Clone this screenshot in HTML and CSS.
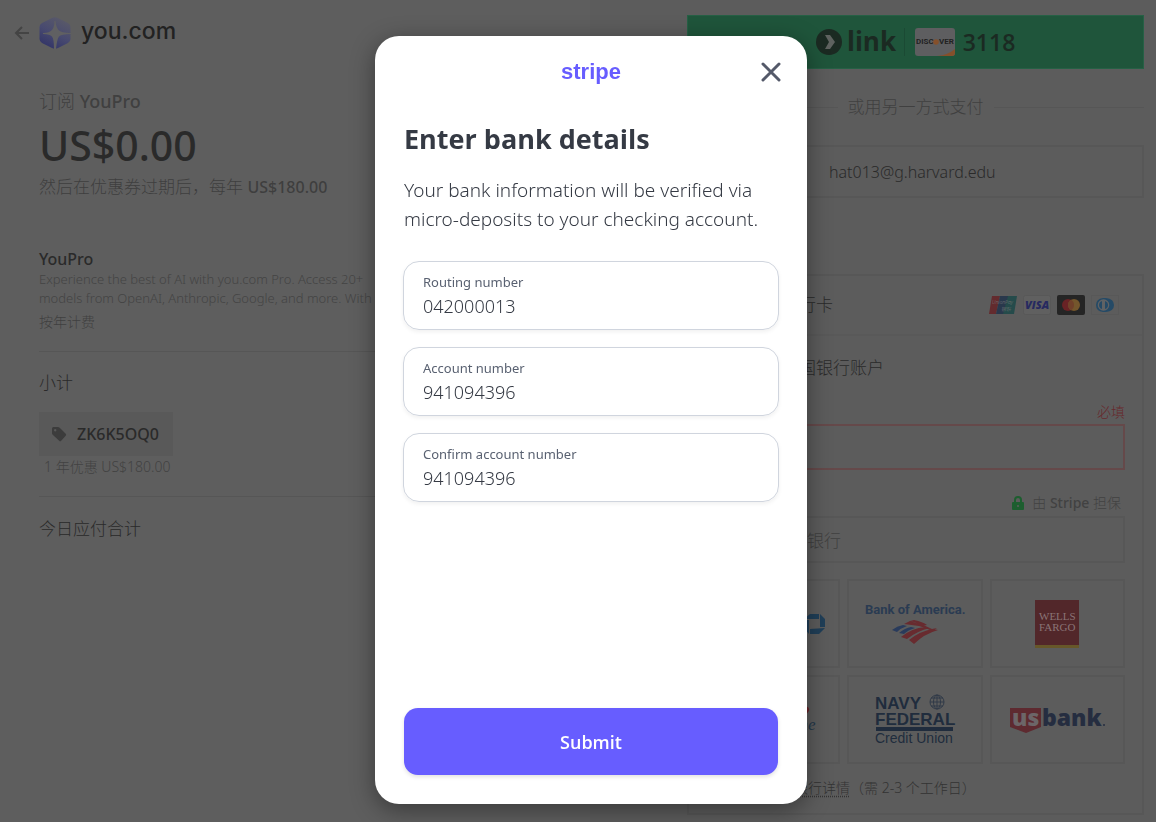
FILE: index.html
```html
<!DOCTYPE html>
<html lang="zh-CN">
<head>
    <meta charset="UTF-8">
    <meta name="viewport" content="width=device-width, initial-scale=1.0">
    <title>you.com - YouPro</title>
    <link rel="stylesheet" href="styles.css">
</head>
<body>
    <main class="checkout">
        <section class="summary">
            <a class="brand" href="#">
                <svg class="back-icon" width="16" height="14" viewBox="0 0 16 14" fill="none" stroke="#444" stroke-width="2">
                    <path d="M15 7H2M8 1L2 7l6 6"/>
                </svg>
                <svg class="logo" width="32" height="32" viewBox="0 0 32 32">
                    <defs>
                        <linearGradient id="hex" x1="0.2" y1="1" x2="0.7" y2="0">
                            <stop offset="0" stop-color="#303266"/>
                            <stop offset="0.5" stop-color="#484a70"/>
                            <stop offset="1" stop-color="#5a5a68"/>
                        </linearGradient>
                    </defs>
                    <path fill="url(#hex)" d="M13 1q3-1.600 6 0l10 5q2.500 1.500 2.500 4v12q0 2.500-2.500 4l-10 5q-3 1.600-6 0l-10-5q-2.500-1.500-2.500-4V10q0-2.500 2.500-4z"/>
                    <path fill="#606062" d="M15.500 4h1q.5 6 3 9t12.500 3v1q-10 0-12 2.500t-3 12.500h-2q0-10-2-12.500T4 17v-1q6.500 0 9-3t2.500-9z"/>
                </svg>
                <span class="brand-name">you.com</span>
            </a>

            <p class="plan">订阅 <b>YouPro</b></p>
            <h1 class="price">US$0.00</h1>
            <p class="after">然后在优惠券过期后，每年 <b>US$180.00</b></p>

            <div class="product">
                <h2>YouPro</h2>
                <p class="description">Experience the best of AI with you.com Pro. Access 20+ models from OpenAI, Anthropic, Google, and more. With</p>
                <p class="billing">按年计费</p>
            </div>
            <div class="subtotal">
                <p class="row-label">小计</p>
                <div class="coupon">
                    <svg width="16" height="16" viewBox="0 0 16 16">
                        <path fill="#3c3c3c" fill-rule="evenodd" d="M1 2.500Q1 1 2.500 1H7q1 0 1.700.7l6 6q1 1 0 2l-4.500 5q-1 1-2 0l-6.500-6Q1 8 1 7zM4.200 3a1.200 1.200 0 1 0 .01 0z"/>
                    </svg>
                    <span>ZK6K5OQ0</span>
                </div>
                <p class="discount">1 年优惠 US$180.00</p>
            </div>
            <p class="total">今日应付合计</p>
        </section>

        <section class="payment">
            <button class="link-button" type="button">
                <svg width="78" height="28" viewBox="0 0 78 28">
                    <circle cx="13" cy="14" r="13" fill="#1b2a22"/>
                    <path d="M9 7h5l5 7-5 7H9l4-7z" fill="#5e625f"/>
                    <text x="31" y="23" class="link-word">link</text>
                </svg>
                <span class="bar"></span>
                <svg width="40" height="28" viewBox="0 0 40 28">
                    <rect width="40" height="28" rx="3" fill="#5e5e60"/>
                    <path fill="#85502b" d="M22 28q11-1 18-7v4q0 3-3 3z"/>
                    <text x="1" y="16" class="discover">DISC</text>
                    <circle cx="21" cy="14" r="2.800" fill="#85502b"/>
                    <text x="24" y="16" class="discover">VER</text>
                </svg>
                <span class="last4">3118</span>
            </button>

            <div class="divider">或用另一方式支付</div>

            <div class="email">
                <span class="email-label">电子邮件</span>
                <span>hat013@g.harvard.edu</span>
            </div>

            <div class="methods">
                <div class="method card-method">
                    <span>银行卡</span>
                    <div class="cards">
                        <svg width="28" height="20" viewBox="0 0 28 20">
                            <path fill="#632b2e" d="M3 1h8L7 19H0z"/>
                            <path fill="#29384c" d="M11 1h9l-5 18H7z"/>
                            <path fill="#254b4b" d="M19 1h9l-3 18H14z"/>
                            <text x="3" y="9" class="union">UnionPay</text>
                            <text x="12" y="16" class="union">银联</text>
                        </svg>
                        <svg width="28" height="20" viewBox="0 0 28 20">
                            <rect x="0.500" y="0.500" width="27" height="19" rx="2" fill="#606060" stroke="#585858"/>
                            <text x="2" y="14" class="visa">VISA</text>
                        </svg>
                        <svg width="28" height="20" viewBox="0 0 28 20">
                            <rect width="28" height="20" rx="2" fill="#252525"/>
                            <circle cx="11" cy="10" r="6" fill="#692225"/>
                            <circle cx="17" cy="10" r="6" fill="#74562c"/>
                            <path fill="#70402a" d="M14 4.800a6 6 0 0 1 0 10.400 6 6 0 0 1 0-10.400z"/>
                        </svg>
                        <svg width="28" height="20" viewBox="0 0 28 20">
                            <rect x="0.500" y="0.500" width="27" height="19" fill="none" stroke="#585858"/>
                            <path fill="#254a66" d="M12 3h3q8 1 8 7t-8 7h-3q-7-1-7-7t7-7z"/>
                            <circle cx="12.500" cy="10" r="5.800" fill="#606264"/>
                            <path fill="#254a66" d="M11 6v8q-3-1-3-4t3-4zM14 6v8q3-1 3-4t-3-4z"/>
                        </svg>
                    </div>
                </div>
                <div class="bank-method">
                    <p class="method-title">美国银行账户</p>
                    <label class="required" for="holder">必填</label>
                    <input class="holder" id="holder" type="text">
                    <p class="secure">
                        <svg width="12" height="15" viewBox="0 0 12 15">
                            <path d="M3 7V4q0-3 3-3t3 3v3" fill="none" stroke="#1d5e2f" stroke-width="2"/>
                            <rect y="6" width="12" height="8" rx="1" fill="#1d5e2f"/>
                            <circle cx="6" cy="10" r="1" fill="#5e5e5e"/>
                        </svg>
                        <span>由 <b>Stripe</b> 担保</span>
                    </p>
                    <input class="search" type="text" placeholder="搜索您的银行" aria-label="搜索您的银行">
                    <div class="banks">
                        <button type="button" class="bank" aria-label="Chase">
                            <svg width="108" height="60" viewBox="0 0 108 60">
                                <path fill="#203f58" d="M91 20h9v5H85zM101 20l5 5v8h-5zM106 34l-6 6H91v-5zM90 40l-5-6v-8h5z"/>
                            </svg>
                        </button>
                        <button type="button" class="bank" aria-label="Bank of America">
                            <svg width="104" height="60" viewBox="0 0 104 60">
                                <text x="2" y="20" class="bofa">Bank of America.</text>
                                <g transform="translate(29 26)">
                                    <path fill="#293b5c" d="M0 10q5-4 11-5l4 1Q9 8 5 12zM7 13q6-5 12-6l4 1q-7 2-11 6z"/>
                                    <path fill="#682b2f" d="M12 4l6-3 9 3q8 2 13 5l5-1-5 3q-5-3-13-5zM18 1l4-1q9 2 13 5l-5 1q-4-3-12-5zM9 17Q20 8 33 7l5 1Q25 11 15 19zM17 20Q28 11 41 9l5 1Q32 14 22 24z"/>
                                </g>
                            </svg>
                        </button>
                        <button type="button" class="bank" aria-label="Wells Fargo">
                            <svg width="44" height="48" viewBox="0 0 44 48">
                                <path fill="#52272a" d="M0 0h44v45H0z"/>
                                <path fill="#675729" d="M0 45h44v3H0z"/>
                                <text x="4" y="20" class="wells">WELLS</text>
                                <text x="4" y="31" class="wells">FARGO</text>
                            </svg>
                        </button>
                        <button type="button" class="bank" aria-label="Capital One">
                            <svg width="90" height="60" viewBox="0 0 90 60">
                                <path fill="#6b2429" d="M28 26q28-12 50-10 8 3-4 12 2-7-8-9-14-1-38 7z"/>
                                <text x="4" y="40" class="capital">Capital One</text>
                            </svg>
                        </button>
                        <button type="button" class="bank" aria-label="Navy Federal Credit Union">
                            <svg width="80" height="54" viewBox="0 0 80 54">
                                <text x="0" y="16" class="navy">NAVY</text>
                                <text x="0" y="32" class="navy">FEDERAL</text>
                                <path fill="#202c3d" d="M1 34h77v4H1z"/>
                                <text x="0" y="50" class="credit">Credit Union</text>
                                <g fill="none" stroke="#303a48" stroke-width="1">
                                    <circle cx="62" cy="9" r="7"/>
                                    <ellipse cx="62" cy="9" rx="3.500" ry="7"/>
                                    <path d="M62 2v14M55 9h14M56 5h12M56 13h12"/>
                                </g>
                            </svg>
                        </button>
                        <button type="button" class="bank" aria-label="U.S. Bank">
                            <svg width="94" height="28" viewBox="0 0 94 28">
                                <path fill="#5e2a30" d="M0 2h31v19l-15 6-16-6z"/>
                                <text x="2" y="20" class="us">us</text>
                                <text x="32" y="20" class="usbank">bank</text>
                                <circle cx="94" cy="19" r="1" fill="#252d40"/>
                            </svg>
                        </button>
                    </div>
                    <p class="manual"><a href="#">手动输入您的银行详情</a>（需 2-3 个工作日）</p>
                </div>
            </div>
        </section>
    </main>

    <div class="overlay">
        <form class="modal" role="dialog" aria-labelledby="modal-title">
            <div class="modal-header">
                <span class="stripe">stripe</span>
                <button class="close" type="button" aria-label="Close">
                    <svg width="20" height="20" viewBox="0 0 20 20" stroke="#545969" stroke-width="3" stroke-linecap="round">
                        <path d="M2 2l16 16M18 2L2 18"/>
                    </svg>
                </button>
            </div>
            <h2 id="modal-title">Enter bank details</h2>
            <p class="intro">Your bank information will be verified via micro-deposits to your checking account.</p>
            <div class="fields">
                <div class="field">
                    <label for="routing">Routing number</label>
                    <input type="text" id="routing" value="042000013">
                </div>
                <div class="field">
                    <label for="account">Account number</label>
                    <input type="text" id="account" value="941094396">
                </div>
                <div class="field">
                    <label for="confirm">Confirm account number</label>
                    <input type="text" id="confirm" value="941094396">
                </div>
            </div>
            <button class="submit" type="submit">Submit</button>
        </form>
    </div>
</body>
</html>
```
FILE: styles.css
```css
* {
    box-sizing: border-box;
}
body {
    font-family: "Noto Sans", "Noto Sans CJK SC", sans-serif;
    font-size: 17px;
    font-weight: 300;
    line-height: 24px;
    margin: 0;
    background: linear-gradient(90deg, #5e5e5e 51%, #5c5c5c 51%);
    color: #2a2a2a;
}
p, h1, h2 {
    margin: 0;
}
b {
    font-weight: 500;
}
button, input {
    font: inherit;
    color: inherit;
}
svg {
    overflow: visible;
}
.checkout {
    display: grid;
    grid-template-columns: 1fr 1fr;
    column-gap: 191px;
    min-height: 100vh;
    padding: 15px 12px 7px 39px;
}

/* Order summary */
.brand {
    display: flex;
    align-items: center;
    height: 36px;
    margin-left: -25px;
    color: #222;
    text-decoration: none;
}
.back-icon {
    margin-right: 9px;
}
.brand-name {
    font-family: Inter, sans-serif;
    font-size: 23px;
    font-weight: 500;
    margin: 0 0 4px 10px;
}
.plan {
    font-size: 18px;
    margin-top: 38px;
    color: #404040;
}
.price {
    font-size: 41px;
    font-weight: 500;
    line-height: 60px;
    margin-top: 2px;
}
.after {
    color: #3e3e3e;
}
.after b {
    font-size: 16px;
}
.product {
    margin-top: 49px;
    padding-bottom: 18px;
    border-bottom: 1px solid #565656;
}
.product h2 {
    font-size: 16px;
    font-weight: 500;
    line-height: 22px;
}
.description {
    max-width: 360px;
    font-size: 13px;
    line-height: 19px;
    color: #444;
}
.billing {
    font-size: 14px;
    line-height: 22px;
    margin-top: 3px;
    color: #404040;
}
.subtotal {
    padding: 19px 0 18px;
    border-bottom: 1px solid #565656;
}
.coupon {
    display: inline-flex;
    align-items: center;
    gap: 10px;
    height: 44px;
    margin-top: 17px;
    padding: 0 14px 0 12px;
    background-color: #595959;
    font-size: 16px;
    font-weight: 500;
}
.discount {
    font-size: 14px;
    line-height: 22px;
    padding-left: 5px;
    color: #424242;
}
.total {
    margin-top: 20px;
}

/* Payment column */
.link-button {
    display: flex;
    align-items: center;
    justify-content: center;
    width: 100%;
    height: 54px;
    padding: 0;
    background-color: #1f553b;
    border: 1px solid #266045;
    color: #1b2a22;
}
.link-word {
    font-family: "Open Sans", sans-serif;
    font-size: 26px;
    font-weight: 700;
    fill: #1b2a22;
}
.bar {
    width: 1px;
    height: 28px;
    margin: 0 10px;
    background-color: #1b4a34;
}
.discover {
    font-family: Roboto, sans-serif;
    font-size: 8px;
    font-weight: 700;
    fill: #222;
}
.last4 {
    font-family: "Open Sans", sans-serif;
    font-size: 23px;
    font-weight: 600;
    margin-left: 8px;
}
.divider {
    display: flex;
    align-items: center;
    gap: 10px;
    margin-top: 26px;
    color: #404040;
}
.divider::before, .divider::after {
    content: "";
    flex: 1;
    height: 1px;
    background-color: #565656;
}
.email {
    display: flex;
    align-items: center;
    height: 53px;
    margin-top: 26px;
    padding: 0 18px;
    border: 2px solid #575757;
    font-size: 16px;
}
.email-label {
    width: 122px;
}
.methods {
    margin-top: 76px;
    border: 2px solid #575757;
}
.card-method {
    display: flex;
    align-items: center;
    justify-content: space-between;
    height: 60px;
    padding: 0 23px 0 93px;
    border-bottom: 2px solid #595959;
}
.cards {
    display: flex;
    gap: 6px;
}
.union {
    font-size: 5px;
    font-style: italic;
    fill: #777;
}
.visa {
    font-family: "Open Sans", sans-serif;
    font-size: 11px;
    font-style: italic;
    font-weight: 800;
    fill: #262a60;
}
.bank-method {
    padding: 20px 17px 13px 16px;
}
.method-title {
    padding-left: 77px;
}
.required {
    display: block;
    text-align: right;
    font-size: 14px;
    line-height: 20px;
    margin-top: 22px;
    color: #67292d;
}
.holder, .search {
    display: block;
    width: 100%;
    background: none;
    border: 2px solid #575757;
    border-radius: 0;
}
.holder {
    height: 46px;
    margin-top: 2px;
    border-color: #65494a;
}
.secure {
    display: flex;
    align-items: center;
    justify-content: flex-end;
    gap: 8px;
    height: 22px;
    margin-top: 22px;
    padding-right: 4px;
    font-size: 14px;
    color: #424242;
}
.search {
    height: 47px;
    margin-top: 2px;
    padding: 2px 32px 0;
}
.search::placeholder {
    color: #404040;
}
.banks {
    display: grid;
    grid-template-columns: 1fr 1fr 1fr;
    gap: 7px;
    margin-top: 16px;
}
.bank {
    display: flex;
    align-items: center;
    justify-content: center;
    height: 89px;
    padding: 0;
    background: none;
    border: 2px solid #575757;
}
.bofa {
    font-family: Roboto, sans-serif;
    font-size: 13px;
    font-weight: 700;
    fill: #2a3b52;
}
.wells {
    font-family: "Liberation Serif", serif;
    font-size: 11px;
    fill: #8a7476;
}
.capital {
    font-family: "Liberation Serif", serif;
    font-size: 17px;
    font-style: italic;
    fill: #25384a;
}
.navy {
    font-family: "Liberation Sans", sans-serif;
    font-size: 17px;
    font-weight: 700;
    fill: #202c3d;
}
.credit {
    font-family: "Liberation Sans", sans-serif;
    font-size: 14px;
    fill: #202c3d;
}
.us, .usbank {
    font-family: "Open Sans", sans-serif;
    font-size: 23px;
    font-weight: 800;
    fill: #6c6668;
}
.usbank {
    fill: #252d40;
}
.manual {
    font-size: 14px;
    margin-top: 12px;
    padding-left: 5px;
    color: #333;
}
.manual a {
    color: inherit;
    text-decoration: underline dotted;
    text-underline-offset: 3px;
}

/* Bank details dialog */
.overlay {
    position: fixed;
    inset: 0;
    display: flex;
    justify-content: center;
    padding: 36px 0 18px 26px;
}
.modal {
    display: flex;
    flex-direction: column;
    width: 432px;
    padding: 20px 28px 29px;
    background-color: #fff;
    border-radius: 24px;
    box-shadow: 0 6px 24px rgba(0, 0, 0, 0.4);
    color: #353a44;
}
.modal-header {
    display: grid;
    grid-template-columns: 1fr auto 1fr;
    align-items: center;
    height: 32px;
}
.stripe {
    grid-column: 2;
    font-family: "Liberation Sans", sans-serif;
    font-size: 22px;
    font-weight: 700;
    color: #675dff;
}
.close {
    justify-self: end;
    display: flex;
    padding: 0;
    margin-right: -2px;
    background: none;
    border: none;
    cursor: pointer;
}
.modal h2 {
    font-family: "Open Sans", sans-serif;
    font-size: 27px;
    font-weight: 700;
    line-height: 40px;
    margin: 31px 0 17px 1px;
}
.intro {
    font-size: 19px;
    line-height: 29px;
    margin-left: 1px;
}
.fields {
    display: flex;
    flex-direction: column;
    gap: 17px;
    margin-top: 27px;
}
.field {
    height: 69px;
    padding: 9px 19px;
    border: 1px solid #d0d5de;
    border-radius: 16px;
    box-shadow: 0 2px 4px rgba(0, 0, 0, 0.06);
}
.field label {
    display: block;
    font-size: 13px;
    font-weight: 400;
    line-height: 22px;
    color: #596171;
}
.field input {
    display: block;
    width: 100%;
    height: 26px;
    padding: 0;
    border: none;
    outline: none;
    background: none;
    font-size: 18px;
}
.submit {
    height: 67px;
    margin: auto 1px 0;
    border: none;
    border-radius: 14px;
    background-color: #675dff;
    box-shadow: 0 2px 4px rgba(0, 0, 0, 0.12);
    color: #fff;
    font-family: "Open Sans", sans-serif;
    font-size: 18px;
    font-weight: 600;
    cursor: pointer;
}
```
